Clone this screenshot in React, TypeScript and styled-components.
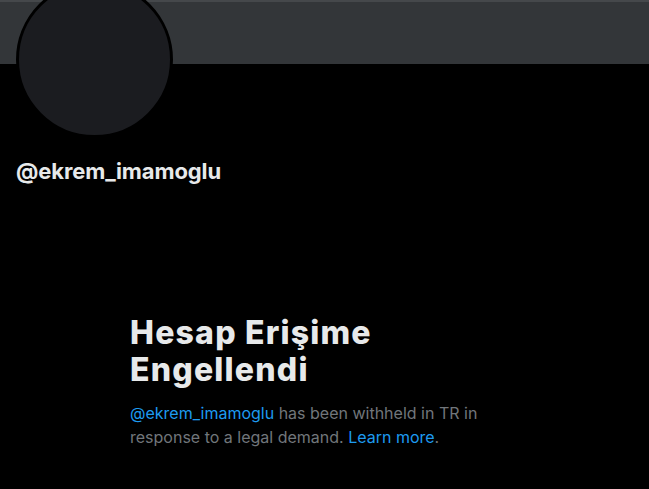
import React from 'react';
import styled, { createGlobalStyle } from 'styled-components';

const GlobalStyle = createGlobalStyle`
  html, body {
    margin: 0;
    padding: 0;
    background: #000;
  }
  body {
    font-family: Inter, "Noto Sans", "Liberation Sans", sans-serif;
    -webkit-font-smoothing: antialiased;
  }
`;

export default function App() {
  return (
    <Page>
      <GlobalStyle />
      <Banner />
      <ProfileHeader>
        <Avatar />
        <Handle>@ekrem_imamoglu</Handle>
      </ProfileHeader>
      <Withheld>
        <Title>Hesap Erişime Engellendi</Title>
        <Message>
          <Link>@ekrem_imamoglu</Link> has been withheld in TR in response to a legal demand.{' '}
          <Link>Learn more</Link>.
        </Message>
      </Withheld>
    </Page>
  );
}

const Page = styled.main`
  width: 649px;
  height: 489px;
  overflow: hidden;
  background: #000;
  display: flex;
  flex-direction: column;
`;

const Banner = styled.div`
  height: 64px;
  flex-shrink: 0;
  background: #333639;
  border-top: 2px solid #45484b;
  box-sizing: border-box;
`;

const ProfileHeader = styled.section`
  display: flex;
  flex-direction: column;
  align-items: flex-start;
  padding: 0 16px;
`;

const Avatar = styled.div`
  width: 151px;
  height: 151px;
  margin-top: -83px;
  border-radius: 50%;
  background: #1b1c20;
  border: 3px solid #000;
`;

const Handle = styled.h2`
  margin: 21px 0 0;
  font-size: 22px;
  font-weight: 700;
  color: #e7e9ea;
  line-height: 24px;
  letter-spacing: -0.1px;
`;

const Withheld = styled.section`
  width: 389px;
  margin: 131px auto 0;
  display: flex;
  flex-direction: column;
  gap: 13px;
`;

const Title = styled.h1`
  margin: 0;
  max-width: 300px;
  font-size: 32px;
  line-height: 37px;
  font-weight: 800;
  color: #e7e9ea;
  letter-spacing: 1.2px;
`;

const Message = styled.p`
  margin: 0;
  font-size: 16px;
  line-height: 24px;
  color: #71767b;
`;

const Link = styled.span`
  color: #1d9bf0;
`;
